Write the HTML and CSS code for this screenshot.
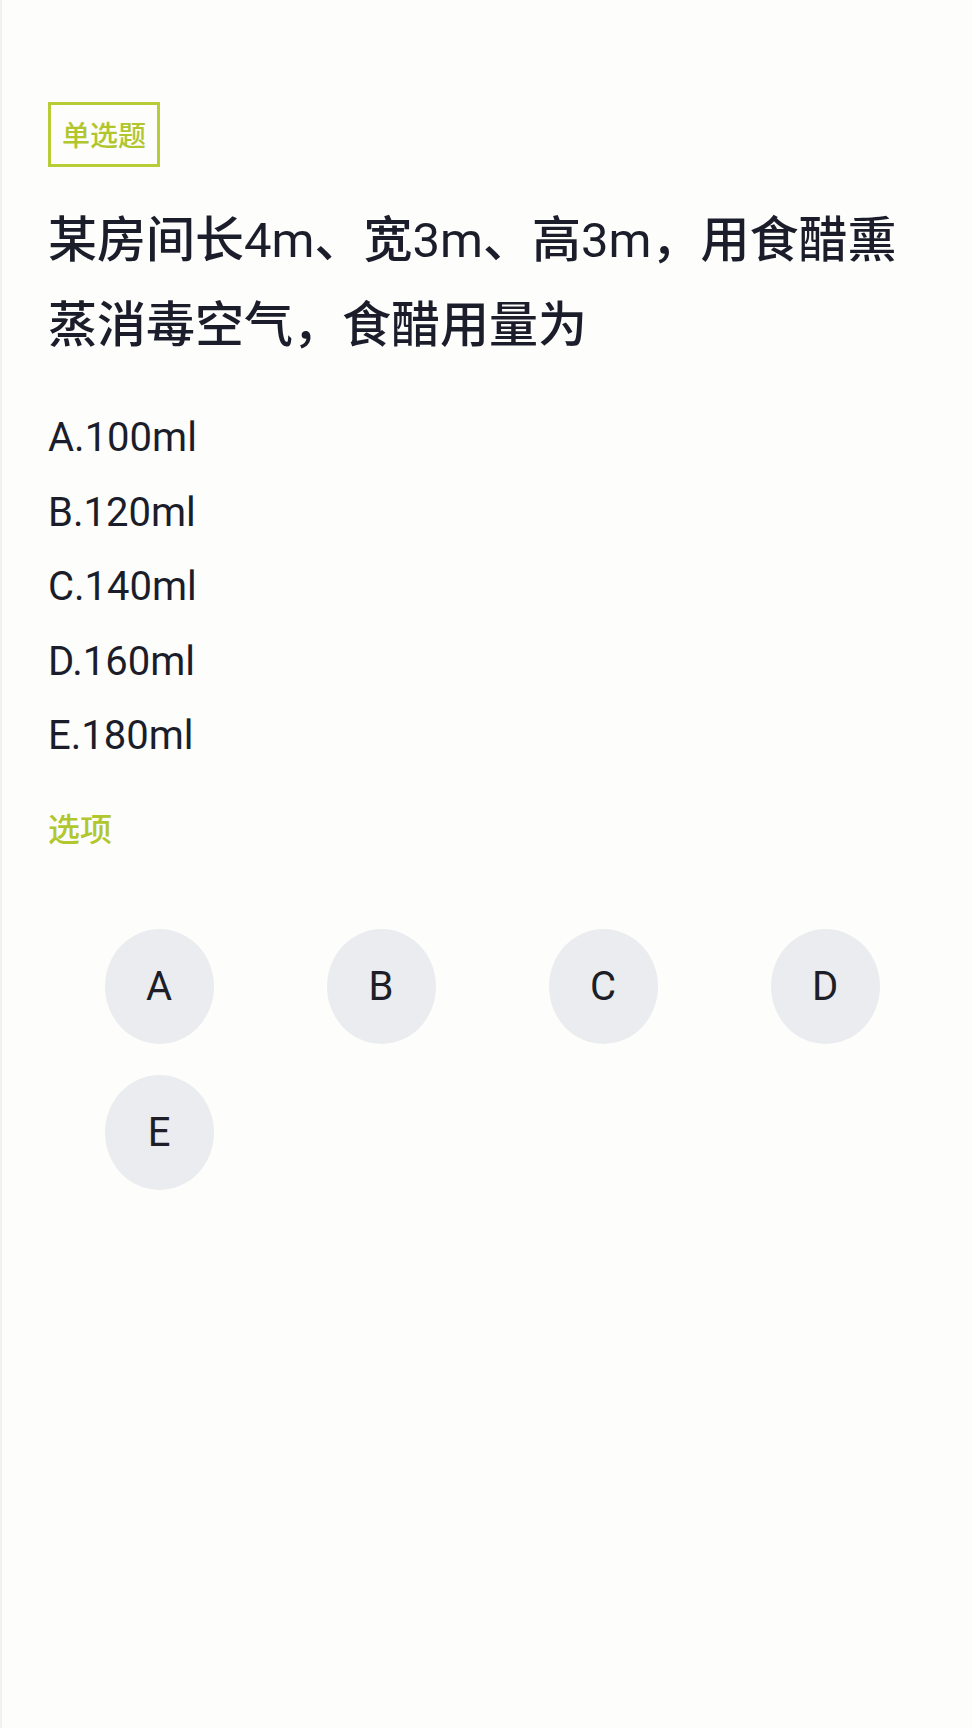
FILE: index.html
```html
<!DOCTYPE html>
<html lang="zh-CN">
<head>
<meta charset="utf-8">
<title>单选题</title>
<link rel="stylesheet" href="styles.css">
</head>
<body>
<div class="page">
  <div class="badge">单选题</div>
  <h1 class="title">某房间长<span class="num">4m</span>、宽<span class="num">3m</span>、高<span class="num">3m</span>，用食醋熏蒸消毒空气，食醋用量为</h1>
  <ul class="options">
    <li>A.100ml</li>
    <li>B.120ml</li>
    <li>C.140ml</li>
    <li>D.160ml</li>
    <li>E.180ml</li>
  </ul>
  <div class="section-label">选项</div>
  <div class="choices">
    <div class="choice">A</div>
    <div class="choice">B</div>
    <div class="choice">C</div>
    <div class="choice">D</div>
    <div class="choice">E</div>
  </div>
</div>
</body>
</html>
```
FILE: styles.css
```css
html, body {
  margin: 0;
  padding: 0;
  background: #fdfdfb;
}
body {
  min-height: 1728px;
  font-family: "Roboto", "Noto Sans CJK SC", sans-serif;
  color: #1b1d2a;
  border-left: 2px solid #f1f1ef;
  box-sizing: border-box;
}
.page {
  padding: 102px 36px 0 46px;
}
.badge {
  display: inline-block;
  border: 3px solid #b8cc36;
  color: #b1c62c;
  font-size: 28px;
  font-weight: 500;
  line-height: 59px;
  padding: 0 11px;
  font-family: "Noto Sans CJK SC", sans-serif;
}
.title {
  margin: 31px 0 0;
  max-width: 870px;
  font-size: 49px;
  font-weight: 500;
  line-height: 85px;
  letter-spacing: 0;
}
.title .num {
  font-weight: 400;
}
.options {
  list-style: none;
  margin: 33px 0 0;
  padding: 0;
}
.options li {
  font-size: 40px;
  line-height: 74.5px;
}
.section-label {
  margin-top: 29px;
  font-size: 32px;
  font-weight: 500;
  line-height: 48px;
  color: #b2c72d;
  font-family: "Noto Sans CJK SC", sans-serif;
}
.choices {
  display: grid;
  grid-template-columns: repeat(4, 222px);
  row-gap: 31px;
  justify-items: center;
  margin-top: 78px;
}
.choice {
  width: 109px;
  height: 115px;
  border-radius: 50%;
  background: #ebecef;
  color: #1d1e27;
  font-size: 40px;
  display: flex;
  align-items: center;
  justify-content: center;
}
```
